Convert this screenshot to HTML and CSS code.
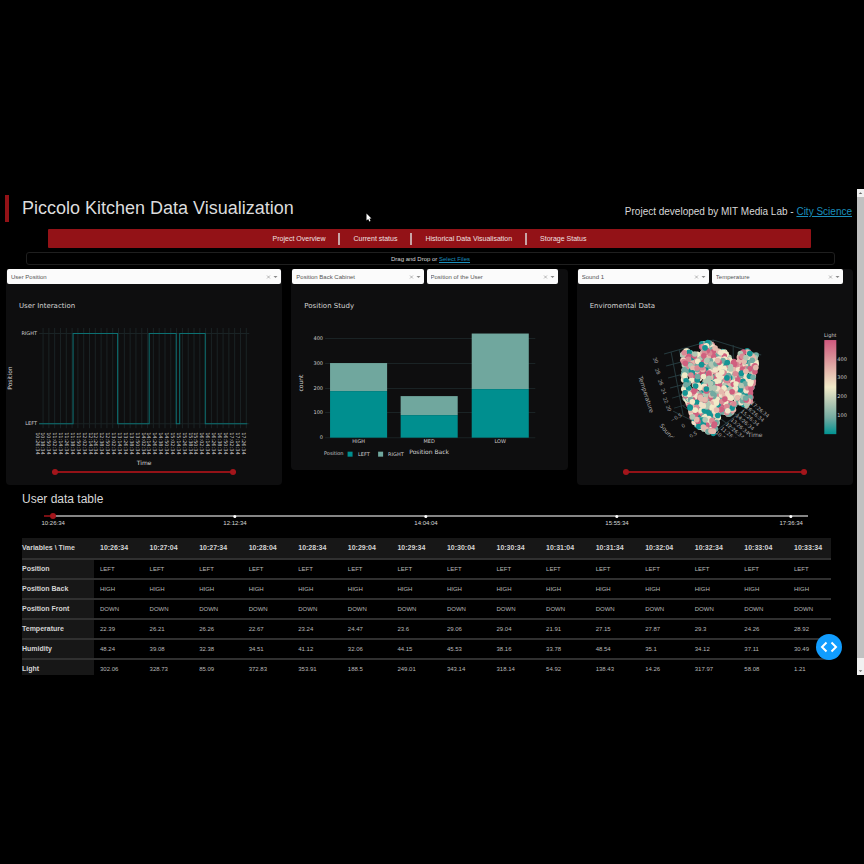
FILE: index.html
```html
<!DOCTYPE html>
<html lang="en">
<head>
<meta charset="utf-8">
<title>Piccolo Kitchen Data Visualization</title>
<link rel="stylesheet" href="styles.css">
</head>
<body>
<div class="app">
<main class="page">
  <header class="header">
    <h1>Piccolo Kitchen Data Visualization</h1>
    <p>Project developed by MIT Media Lab - <a href="#">City Science</a></p>
  </header>
  <nav class="nav"><a href="#">Project Overview</a><a href="#">Current status</a><a href="#">Historical Data Visualisation</a><a href="#">Storage Status</a></nav>
  <div class="upload">Drag and Drop or&nbsp;<a href="#">Select Files</a></div>

  <section class="cards">
    <article class="card">
      <div class="pickers">
        <div class="picker"><select aria-label="Variable"><option>User Position</option></select><svg viewBox="0 0 12 6"><path class="x" d="M1 1.500l3 3M4 1.500l-3 3"/><path class="caret" d="M7.500 2h4l-2 2z"/></svg></div>
      </div>
      <h2>User Interaction</h2>
      <svg class="chart" viewBox="0 0 276 154">
        <g id="time-grid" class="grid"></g>
        <path class="grid" d="M33 22.500H243M33 112.500H243"/>
        <path class="trace" d="M33 112.500H67V22.500H111.500V112.500H143V22.500H170V112.500H173.500V22.500H199V112.500H241"/>
        <g class="tick end"><text x="31" y="24">RIGHT</text><text x="31" y="114">LEFT</text></g>
        <g id="time-ticks" class="tick"></g>
        <text class="axis" transform="translate(6 67) rotate(-90)">Position</text>
        <text class="axis" x="138" y="154">Time</text>
      </svg>
      <div class="range"><input type="range" aria-label="Start time" value="0"><input type="range" aria-label="End time" value="100"></div>
    </article>

    <article class="card">
      <div class="pickers split">
        <div class="picker"><select aria-label="Category"><option>Position Back Cabinet</option></select><svg viewBox="0 0 12 6"><path class="x" d="M1 1.500l3 3M4 1.500l-3 3"/><path class="caret" d="M7.500 2h4l-2 2z"/></svg></div>
        <div class="picker"><select aria-label="Group"><option>Position of the User</option></select><svg viewBox="0 0 12 6"><path class="x" d="M1 1.500l3 3M4 1.500l-3 3"/><path class="caret" d="M7.500 2h4l-2 2z"/></svg></div>
      </div>
      <h2>Position Study</h2>
      <svg class="chart" viewBox="0 0 276 159">
        <path class="grid" d="M34 27.500H244M34 52.500H244M34 77.500H244M34 101.500H244M34 126.500H244"/>
        <g class="right"><rect x="39" y="52" width="57" height="28"/><rect x="109.500" y="85" width="57" height="19"/><rect x="180.500" y="22.500" width="57" height="55.500"/></g>
        <g class="left"><rect x="39" y="80" width="57" height="46.500"/><rect x="109.500" y="104" width="57" height="22.500"/><rect x="180.500" y="78" width="57" height="48.500"/></g>
        <g class="tick end"><text x="32" y="29">400</text><text x="32" y="54">300</text><text x="32" y="79">200</text><text x="32" y="103">100</text><text x="32" y="128">0</text></g>
        <g class="tick mid"><text x="67.500" y="132">HIGH</text><text x="138" y="132">MED</text><text x="209" y="132">LOW</text></g>
        <text class="axis" transform="translate(12 72) rotate(-90)">count</text>
        <text class="axis" x="138" y="143">Position Back</text>
        <g class="tick"><text x="33" y="144">Position</text><text x="67" y="145">LEFT</text><text x="97" y="145">RIGHT</text></g>
        <rect class="left" x="56.500" y="140.500" width="5" height="5"/><rect class="right" x="87" y="140.500" width="5" height="5"/>
      </svg>
    </article>

    <article class="card">
      <div class="pickers split">
        <div class="picker"><select aria-label="Depth axis"><option>Sound 1</option></select><svg viewBox="0 0 12 6"><path class="x" d="M1 1.500l3 3M4 1.500l-3 3"/><path class="caret" d="M7.500 2h4l-2 2z"/></svg></div>
        <div class="picker"><select aria-label="Vertical axis"><option>Temperature</option></select><svg viewBox="0 0 12 6"><path class="x" d="M1 1.500l3 3M4 1.500l-3 3"/><path class="caret" d="M7.500 2h4l-2 2z"/></svg></div>
      </div>
      <h2>Enviromental Data</h2>
      <svg class="chart" viewBox="0 0 276 154">
        <defs>
          <linearGradient id="tealrose" x1="0" y1="0" x2="0" y2="1">
            <stop offset="0" stop-color="#d0587e"/><stop offset=".17" stop-color="#d98994"/><stop offset=".33" stop-color="#e5b9ad"/><stop offset=".5" stop-color="#f1eac8"/><stop offset=".67" stop-color="#b1c7b3"/><stop offset=".83" stop-color="#72aaa1"/><stop offset="1" stop-color="#009392"/>
          </linearGradient>
          <clipPath id="scene"><rect width="230" height="126"/></clipPath>
        </defs>
        <g clip-path="url(#scene)">
          <path class="grid3d" d="M87 43L136 29L184 44M89 55L108 50M91 67L110 62M93 77L112 72M95 87L112 82M97 97L114 92M94 41L106 104M102 38L114 98M136 29V40M156 34V50M96 100L120 112M106 95L130 112M136 122L178 90M166 92L178 101M154 100L168 110M144 108L158 119"/>
          <g id="dots"></g>
          <g class="tick mid dim">
            <text transform="translate(77 50) rotate(65)">30</text><text transform="translate(79 61) rotate(65)">28</text><text transform="translate(82 72) rotate(65)">26</text><text transform="translate(85 81) rotate(65)">24</text><text transform="translate(87 90) rotate(65)">22</text><text transform="translate(90 98) rotate(65)">20</text>
            <text transform="translate(100 108) rotate(-30)">−0.5</text><text transform="translate(107 116) rotate(-30)">0</text><text transform="translate(117 125) rotate(-30)">0.5</text>
            <text class="axis" transform="translate(67 84) rotate(72)">Temperature</text>
            <text class="axis" transform="translate(90 124) rotate(50)">Sound 1</text>
            <text class="axis" x="178" y="126">Time</text>
          </g>
          <g id="depth-ticks" class="tick dim"></g>
        </g>
        <rect fill="url(#tealrose)" x="247" y="29" width="12" height="94"/>
        <text class="tick mid" x="253" y="26">Light</text>
        <g class="tick"><text x="260" y="50">400</text><text x="260" y="68">300</text><text x="260" y="87">200</text><text x="260" y="106">100</text></g>
      </svg>
      <div class="range"><input type="range" aria-label="Start time" value="0"><input type="range" aria-label="End time" value="100"></div>
    </article>
  </section>

  <h2 class="table-title">User data table</h2>
  <div class="timeline">
    <input type="range" aria-label="Table start time" min="0" max="1000" value="8">
    <span class="mark first" style="left:1.2%">10:26:34</span><span class="mark" style="left:25%">12:12:34</span><span class="mark" style="left:50%">14:04:04</span><span class="mark" style="left:75%">15:55:34</span><span class="mark" style="left:97.8%">17:36:34</span>
  </div>
  <table>
    <thead><tr><th>Variables \ Time<th>10:26:34<th>10:27:04<th>10:27:34<th>10:28:04<th>10:28:34<th>10:29:04<th>10:29:34<th>10:30:04<th>10:30:34<th>10:31:04<th>10:31:34<th>10:32:04<th>10:32:34<th>10:33:04<th>10:33:34</tr></thead>
    <tbody>
      <tr><th>Position<td>LEFT<td>LEFT<td>LEFT<td>LEFT<td>LEFT<td>LEFT<td>LEFT<td>LEFT<td>LEFT<td>LEFT<td>LEFT<td>LEFT<td>LEFT<td>LEFT<td>LEFT</tr>
      <tr><th>Position Back<td>HIGH<td>HIGH<td>HIGH<td>HIGH<td>HIGH<td>HIGH<td>HIGH<td>HIGH<td>HIGH<td>HIGH<td>HIGH<td>HIGH<td>HIGH<td>HIGH<td>HIGH</tr>
      <tr><th>Position Front<td>DOWN<td>DOWN<td>DOWN<td>DOWN<td>DOWN<td>DOWN<td>DOWN<td>DOWN<td>DOWN<td>DOWN<td>DOWN<td>DOWN<td>DOWN<td>DOWN<td>DOWN</tr>
      <tr><th>Temperature<td>22.39<td>26.21<td>26.26<td>22.67<td>23.24<td>24.47<td>23.6<td>29.06<td>29.04<td>21.91<td>27.15<td>27.87<td>29.3<td>24.26<td>28.92</tr>
      <tr><th>Humidity<td>48.24<td>39.08<td>32.38<td>34.51<td>41.12<td>32.06<td>44.15<td>45.53<td>38.16<td>33.78<td>48.54<td>35.1<td>34.12<td>37.11<td>30.49</tr>
      <tr><th>Light<td>302.06<td>328.73<td>85.09<td>372.83<td>353.91<td>188.5<td>249.01<td>343.14<td>318.14<td>54.92<td>138.43<td>14.26<td>317.97<td>58.08<td>1.21</tr>
    </tbody>
  </table>
</main>
<div class="scrollbar" aria-hidden="true">
  <svg viewBox="0 0 8 8"><path d="M2 5l2-2 2 2z"/></svg>
  <div class="thumb"></div>
  <svg viewBox="0 0 8 8"><path d="M2 3l2 2 2-2z"/></svg>
</div>
<button class="debug" aria-label="Debug menu"><svg viewBox="0 0 26 26"><path d="M10.500 8.500L6 13L10.500 17.500M15.500 8.500L20 13L15.500 17.500"/></svg></button>
<svg class="cursor" viewBox="0 0 6 9" aria-hidden="true"><path d="M.5.5V7.500L2.200 6L3.300 8.500L4.500 8L3.500 5.500H5.500z"/></svg>
</div>
<script src="charts.js"></script>
</body>
</html>
```

FILE: styles.css
```css
* { box-sizing: border-box; }
body {
  margin: 0;
  min-height: 100vh;
  display: flex;
  align-items: center;
  background: #000;
  color: #d8d8d8;
  font: 6px/10px "Liberation Sans", Arial, sans-serif;
}
a { color: #1a8fbd; }
h1, h2, p { margin: 0; font-weight: 400; }

.app { position: relative; display: flex; width: 100%; aspect-ratio: 16 / 9; overflow: hidden; }
.page { flex: 1; min-width: 0; overflow: hidden; }

.header { display: flex; justify-content: space-between; align-items: center; height: 40px; padding: 0 5px 2px; }
.header h1 { padding-left: 13px; border-left: 4px solid #931217; font-size: 18px; line-height: 27px; color: #dcdcdc; }
.header p { padding-top: 8px; font-size: 10px; line-height: 14px; }

.nav { display: flex; justify-content: center; align-items: center; height: 19px; margin: 0 46px 0 48px; border-radius: 1px; background: #931217; }
.nav a { padding: 0 13px; font-size: 7px; line-height: 12px; color: #f0e0e0; text-decoration: none; }
.nav a + a { border-left: 2px solid #c9a5a6; }

.upload { display: flex; justify-content: center; align-items: center; height: 13px; margin: 4px 22px 4px 26px; border: 1px solid #1f1f1f; border-radius: 3px; }

.cards { display: grid; grid-template-columns: repeat(3, 1fr); align-items: start; gap: 9px; padding: 0 4px 0 6px; }
.card { background: #0e0e0f; border-radius: 4px; }
.pickers { display: flex; gap: 3px; padding: 0 1px; }
.pickers.split { padding-right: 10px; }
.picker { flex: 1; display: grid; align-items: center; }
.picker > * { grid-area: 1 / 1; }
.picker select { appearance: none; width: 100%; height: 15px; padding: 0 4px; border: 0; border-radius: 2px; background: #fbfbfb; color: #555; font: inherit; }
.picker svg { width: 12px; height: 6px; margin-right: 3px; justify-self: end; pointer-events: none; }
.x { stroke: #999; stroke-width: .7; }
.caret { fill: #888; }

.card h2 { margin: 17px 0 0 13px; font: 7px/10px "DejaVu Sans", sans-serif; color: #d4d4d4; }
.chart { display: block; width: 100%; overflow: visible; font-family: "DejaVu Sans", sans-serif; }
.grid { fill: none; stroke: #1a2325; stroke-width: 1; }
.grid3d { fill: none; stroke: #263a3e; stroke-width: 1; }
.trace { fill: none; stroke: #0c7072; stroke-width: 1; }
.left { fill: #008f8f; }
.right { fill: #70a79e; }
.tick { fill: #ccc; font-size: 5px; }
.axis { fill: #d4d4d4; font-size: 6px; text-anchor: middle; }
.mid { text-anchor: middle; }
.end { text-anchor: end; }
.dim, .dim .axis { fill: #a8a8a8; }

.range { display: grid; margin: 4px 46px 0; padding-bottom: 10px; }
.range input { grid-area: 1 / 1; pointer-events: none; }
input[type="range"] { appearance: none; display: block; width: 100%; height: 6px; margin: 0; background: linear-gradient(#931217, #931217) center / 100% 2px no-repeat; }
.range input + input { background: none; }
input[type="range"]::-webkit-slider-thumb { appearance: none; width: 6px; height: 6px; border: 0; border-radius: 50%; background: #a3151b; pointer-events: auto; }

.table-title { margin: 7px 0 0 22px; font-size: 12px; line-height: 14px; }
.timeline { position: relative; height: 25px; margin: 7px 49px 0 44px; }
.timeline input[type="range"] { background: linear-gradient(90deg, #7a1014 1%, #858585 1%) center / 100% 2px no-repeat; }
.mark { position: absolute; top: 2px; display: flex; flex-direction: column; align-items: center; transform: translateX(-50%); }
.mark::before { content: ""; width: 3px; height: 3px; border-radius: 50%; background: #fff; }
.mark.first::before { background: none; }

table { width: calc(100% - 48px); margin-left: 22px; border-collapse: collapse; table-layout: fixed; }
th, td { height: 20px; padding: 0 0 0 6px; border-bottom: 2px solid #303030; text-align: left; color: #b8b8b8; }
th { font-size: 7px; color: #d4d4d4; background: #171717; white-space: nowrap; }
thead th { height: 21px; }
th:first-child { width: 72px; padding-left: 0; }
thead th:last-child { width: 43px; }

.scrollbar { display: flex; flex-direction: column; width: 7px; background: #f1f1f1; }
.scrollbar svg { width: 7px; height: 8px; fill: #666; }
.thumb { flex: 1; margin-bottom: 9px; background: #c1c1c1; }

.debug { position: absolute; right: 22px; bottom: 15px; width: 26px; height: 26px; padding: 0; border: 0; border-radius: 50%; background: #119dff; }
.debug svg { display: block; fill: none; stroke: #fff; stroke-width: 2; }
.cursor { position: absolute; left: 366px; top: 24px; width: 6px; height: 9px; fill: #fff; }
```

FILE: charts.js
```js
const SVG = "http://www.w3.org/2000/svg";
function add(parent, tag, attrs, text) {
  const el = document.createElementNS(SVG, tag);
  for (const k in attrs) el.setAttribute(k, attrs[k]);
  if (text) el.textContent = text;
  document.getElementById(parent).appendChild(el);
}
const pad = n => String(n).padStart(2, "0");
function clock(s) { return pad(Math.floor(s / 3600)) + ":" + pad(Math.floor(s / 60) % 60) + ":" + pad(s % 60); }

// Time axis: one tick and one grid line for each step
const start = 10 * 3600 + 26 * 60 + 34;
for (let i = 0; i < 36; i++) {
  const x = 37 + i * 5.8;
  add("time-grid", "path", { d: "M" + x + " 17V117" });
  add("time-ticks", "text", { transform: "translate(" + (29.5 + i * 5.88) + " 121) rotate(90)" }, clock(start + i * 720));
}

// Slanted time ticks of the 3D scene
for (let i = 0; i < 8; i++) {
  add("depth-ticks", "text", { transform: "translate(" + (138 + i * 5) + " " + (122 - i * 4.2) + ") rotate(40)" }, clock(start + i * 3600));
}

// Scatter cloud, filled inside the outline of the data
const outline = [[105,40],[110,39],[115,42],[124,42],[124,33],[130,31],[136,34],[146,38],[151,43],[153,50],[160,50],[163,42],[171,39],[179,42],[179,55],[175,78],[173,93],[168,95],[159,90],[155,104],[149,104],[143,99],[141,107],[138,123],[129,120],[120,115],[114,107],[113,97],[107,86],[106,60]];
function inside(x, y) {
  let hit = false;
  for (let i = 0, j = outline.length - 1; i < outline.length; j = i++) {
    const [a, b] = outline[i], [c, d] = outline[j];
    if ((b > y) !== (d > y) && x < (c - a) * (y - b) / (d - b) + a) hit = !hit;
  }
  return hit;
}
let seed = 11;
function random() { seed = (seed * 16807) % 2147483647; return seed / 2147483647; }
const scale = ["#149594", "#72aaa1", "#b1c7b3", "#f1eac8", "#f1e2c8", "#e5b9ad", "#d98994", "#d0607f"];
for (let n = 0; n < 1100;) {
  const x = 103 + random() * 78, y = 30 + random() * 94;
  if (!inside(x, y)) continue;
  add("dots", "circle", { cx: x.toFixed(1), cy: y.toFixed(1), r: 2.8, fill: scale[Math.floor(random() * 8)] });
  n++;
}
```
